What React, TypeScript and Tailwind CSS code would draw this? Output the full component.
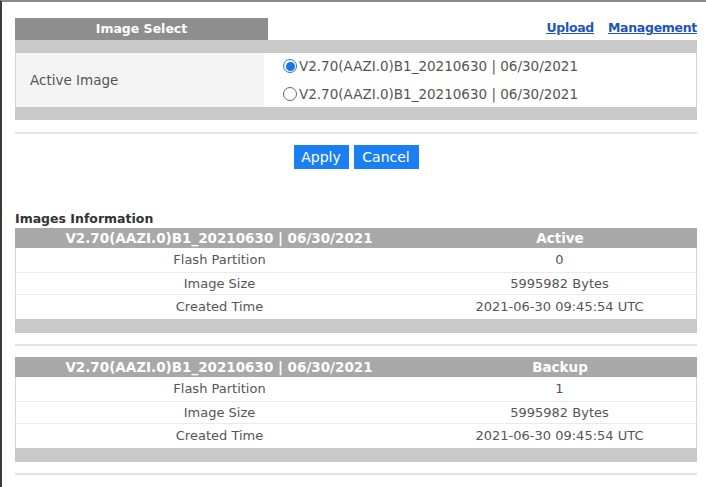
import React, { useState } from 'react';

const VERSION = 'V2.70(AAZI.0)B1_20210630 | 06/30/2021';

interface ImageInfo {
  role: string;
  partition: string;
  size: string;
  created: string;
}

const images: ImageInfo[] = [
  { role: 'Active', partition: '0', size: '5995982 Bytes', created: '2021-06-30 09:45:54 UTC' },
  { role: 'Backup', partition: '1', size: '5995982 Bytes', created: '2021-06-30 09:45:54 UTC' },
];

function Radio({ checked, onClick }: { checked: boolean; onClick: () => void }) {
  return (
    <span
      onClick={onClick}
      className={`flex h-[14px] w-[14px] shrink-0 cursor-pointer items-center justify-center rounded-full border bg-white ${
        checked ? 'border-[#1976e6]' : 'border-[#666]'
      }`}
    >
      {checked && <span className="h-[9px] w-[9px] rounded-full bg-[#1976e6]" />}
    </span>
  );
}

function InfoTable({ info }: { info: ImageInfo }) {
  const rows = [
    ['Flash Partition', info.partition],
    ['Image Size', info.size],
    ['Created Time', info.created],
  ];
  return (
    <div>
      <div className="flex h-[20px] items-center bg-[#a8a8a8] text-[13.5px] font-bold text-white">
        <div className="w-[408px] text-center">{VERSION}</div>
        <div className="flex-1 text-center">{info.role}</div>
      </div>
      {rows.map(([label, value], i) => (
        <div
          key={label}
          className={`flex items-center border-x border-[#d6d6d6] text-[13px] text-[#555] ${
            i === 1 ? 'h-[23px] border-y border-y-[#ebebeb]' : 'h-[24px]'
          }`}
        >
          <div className="w-[407px] text-center">{label}</div>
          <div className="flex-1 text-center">{value}</div>
        </div>
      ))}
      <div className="h-[14px] bg-[#c9c9c9]" />
    </div>
  );
}

export default function App() {
  const [selected, setSelected] = useState(0);

  return (
    <div
      className="h-[487px] w-[706px] overflow-hidden border-l-2 border-t-2 border-l-[#3a3a3a] border-t-[#8a8a8a] bg-white pl-[13px] pr-[9px] pt-[16px]"
      style={{ fontFamily: '"DejaVu Sans", Verdana, sans-serif' }}
    >
      {/* Image Select */}
      <div className="flex items-end justify-between">
        <div className="flex h-[22px] w-[253px] items-center justify-center bg-[#8e8e8e] text-[12.5px] font-bold text-white">
          Image Select
        </div>
        <div className="mb-[2px] flex gap-[14px] text-[12.5px] font-bold tracking-[-0.3px] text-[#1f55b8] underline">
          <a href="#">Upload</a>
          <a href="#">Management</a>
        </div>
      </div>
      <div className="h-[13px] bg-[#c9c9c9]" />
      <div className="flex h-[54px] border-x border-[#d6d6d6] text-[13.5px] text-[#555]">
        <div className="flex w-[248px] items-center bg-[#f3f3f3] pl-[14px]">Active Image</div>
        <div className="flex flex-col justify-center gap-[7px] pl-[19px]">
          {[0, 1].map((i) => (
            <label key={i} className="flex items-center gap-[2px]">
              <Radio checked={selected === i} onClick={() => setSelected(i)} />
              <span>{VERSION}</span>
            </label>
          ))}
        </div>
      </div>
      <div className="h-[13px] bg-[#c9c9c9]" />
      <div className="mt-[12px] h-[2px] bg-[#e3e3e3]" />

      {/* Apply / Cancel */}
      <div className="mt-[11px] flex justify-center gap-[5px] text-[14px] text-white">
        <button className="h-[24px] w-[55px] bg-[#1a7ff2]">Apply</button>
        <button className="h-[24px] w-[65px] bg-[#1a7ff2]">Cancel</button>
      </div>

      {/* Images Information */}
      <div className="mt-[40px] h-[19px] text-[12.5px] font-bold leading-[19px] text-[#333]">
        Images Information
      </div>
      <InfoTable info={images[0]} />
      <div className="mt-[11px] h-[2px] bg-[#e3e3e3]" />
      <div className="mt-[11px]">
        <InfoTable info={images[1]} />
      </div>
      <div className="mt-[11px] h-[2px] bg-[#e3e3e3]" />
    </div>
  );
}
